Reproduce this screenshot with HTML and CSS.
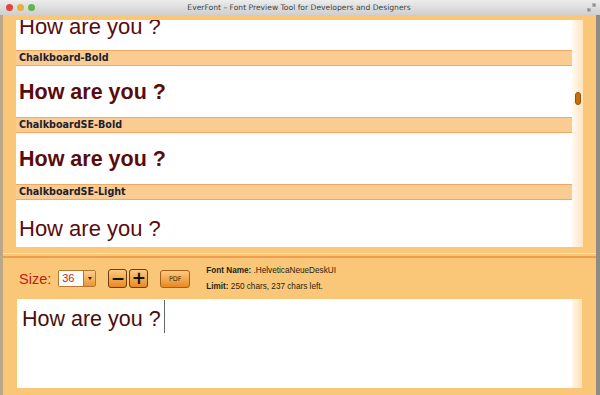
FILE: index.html
```html
<!DOCTYPE html>
<html lang="en">
<head>
  <meta charset="UTF-8">
  <title>EverFont</title>
  <link rel="stylesheet" href="styles.css">
</head>
<body>

<!-- Barre de titre -->
<div class="titlebar">
  <div class="lights">
    <span class="light red"></span>
    <span class="light yellow"></span>
    <span class="light green"></span>
  </div>
  <div class="title">EverFont – Font Preview Tool for Developers and Designers</div>
  <svg class="resize" width="9" height="9" viewBox="0 0 9 9">
    <path d="M5 1h3v3M8 1L5.5 3.5M4 8H1V5M1 8l2.5-2.5" stroke="#8a8a8a" stroke-width="1.2" fill="none"/>
  </svg>
</div>

<div class="window">
  <!-- Liste des polices -->
  <div class="top">
    <div class="list-frame">
      <div class="list">
        <div class="list-inner">
          <div class="preview first">How are you ?</div>
          <div class="band">Chalkboard-Bold</div>
          <div class="preview bold">How are you ?</div>
          <div class="band">ChalkboardSE-Bold</div>
          <div class="preview bold">How are you ?</div>
          <div class="band">ChalkboardSE-Light</div>
          <div class="preview light">How are you ?</div>
        </div>
      </div>
      <div class="track">
        <div class="thumb"></div>
      </div>
    </div>
  </div>

  <div class="divider"></div>

  <!-- Contrôles -->
  <div class="controls">
    <span class="size-label">Size:</span>
    <div class="select">
      <span class="select-value">36</span>
      <span class="select-arrow"><i></i></span>
    </div>
    <div class="stepper">
      <button class="step">−</button>
      <button class="step">+</button>
    </div>
    <button class="pdf">PDF</button>
    <div class="info">
      <div><b>Font Name:</b> .HelveticaNeueDeskUI</div>
      <div><b>Limit:</b> 250 chars, 237 chars left.</div>
    </div>
  </div>

  <!-- Zone de saisie -->
  <div class="editor">
    <div class="editor-text">How are you ?<span class="caret"></span></div>
    <div class="editor-track"></div>
  </div>
</div>

</body>
</html>
```

FILE: styles.css
```css
/* Style global */
body {
  margin: 0;
  width: 600px;
  height: 395px;
  overflow: hidden;
  font-family: "Liberation Sans", Arial, sans-serif;
}

/* Barre de titre */
.titlebar {
  height: 15px;
  background: linear-gradient(#ececec, #cfcfcf);
  display: flex;
  align-items: center;
}

.lights {
  display: flex;
  gap: 4px;
  padding-left: 6px;
}

.light {
  width: 7px;
  height: 7px;
  border-radius: 50%;
}

.light.red { background: #e2463f; }
.light.yellow { background: #e6b03a; }
.light.green { background: #62b648; }

.title {
  flex: 1;
  text-align: center;
  font-family: "DejaVu Sans", sans-serif;
  font-size: 7.6px;
  color: #444;
  padding-right: 24px;
  white-space: nowrap;
}

.resize {
  margin-right: 4px;
}

/* Fenêtre */
.window {
  height: 380px;
  background: #f9c777;
  border-left: 3px solid #bca68a;
  border-right: 4px solid #8e8a86;
  display: flex;
  flex-direction: column;
}

.top {
  padding: 5px 13px 0 13px;
  flex-shrink: 0;
}

.list-frame {
  height: 227px;
  display: flex;
}

.list {
  flex: 1;
  background: #ffffff;
  overflow: hidden;
}

.list-inner {
  margin-top: -21px;
}

.preview {
  height: 51px;
  box-sizing: border-box;
  padding: 14px 0 0 3px;
  white-space: nowrap;
  font-size: 22px;
  line-height: 24px;
  color: #5a0c0c;
}

.preview.first {
  padding-top: 16px;
}

.preview.bold {
  font-weight: bold;
  font-size: 21.5px;
}

.preview.light {
  padding-top: 17px;
}

.band {
  height: 16px;
  box-sizing: border-box;
  background: #fbcc92;
  border-top: 1px solid #f2a864;
  border-bottom: 1px solid #f2a864;
  padding-left: 3px;
  font-family: "DejaVu Sans", sans-serif;
  font-weight: bold;
  font-size: 9.6px;
  line-height: 14px;
  color: #1b2030;
  white-space: nowrap;
}

.track {
  width: 11px;
  background: linear-gradient(to right, #fffaf2, #fde4c0);
}

.thumb {
  width: 4px;
  height: 11px;
  margin: 72px 0 0 3px;
  background: #c46e0c;
  border: 1px solid #9a540a;
  border-radius: 3px;
}

.divider {
  margin-top: 6px;
  height: 2px;
  flex-shrink: 0;
  border-top: 1px solid #fde2b6;
  border-bottom: 2px solid #ee9e50;
}

/* Contrôles */
.controls {
  height: 41px;
  flex-shrink: 0;
  display: flex;
  align-items: center;
  padding-left: 16px;
}

.size-label {
  font-size: 14.5px;
  color: #c41c12;
  margin-right: 7px;
}

.select {
  display: flex;
  height: 15px;
  border: 1px solid #b87630;
  border-radius: 2px;
  margin-right: 12px;
}

.select-value {
  width: 24px;
  background: #fff;
  font-size: 11px;
  line-height: 15px;
  color: #c41c12;
  padding-left: 3px;
  box-sizing: border-box;
}

.select-arrow {
  width: 11px;
  background: linear-gradient(#fdd190, #eb9532);
  border-left: 1px solid #b87630;
  display: flex;
  align-items: center;
  justify-content: center;
}

.select-arrow i {
  width: 0;
  height: 0;
  border-left: 2px solid transparent;
  border-right: 2px solid transparent;
  border-top: 3px solid #3a2208;
}

.stepper {
  display: flex;
  gap: 2px;
  margin-right: 12px;
}

.step {
  width: 19px;
  height: 19px;
  padding: 0;
  border: 1px solid #6e3c0c;
  border-radius: 3px;
  background: linear-gradient(#fdc982, #e8891e);
  font-family: "DejaVu Sans", sans-serif;
  font-weight: bold;
  font-size: 17px;
  line-height: 15px;
  color: #111;
}

.pdf {
  width: 30px;
  height: 18px;
  padding: 0;
  border: 1px solid #a65e1c;
  border-radius: 3px;
  background: linear-gradient(#fdc982, #e8891e);
  font-family: "DejaVu Sans", sans-serif;
  font-size: 6.5px;
  color: #3a2410;
  margin-right: 16px;
}

.info {
  font-size: 8.2px;
  line-height: 16px;
  color: #2a1e10;
  white-space: nowrap;
}

/* Zone de saisie */
.editor {
  height: 89px;
  flex-shrink: 0;
  margin: 0 14px 0 14px;
  display: flex;
}

.editor-text {
  flex: 1;
  background: #ffffff;
  padding: 1px 0 0 5px;
  font-size: 21.5px;
  line-height: 24px;
  color: #4a0f0a;
  white-space: nowrap;
}

.caret {
  display: inline-block;
  width: 1px;
  height: 33px;
  background: #666;
  margin-left: 3px;
  vertical-align: -7px;
}

.editor-track {
  width: 10px;
  background: linear-gradient(to right, #fff6ea, #fde0b8);
}
```
